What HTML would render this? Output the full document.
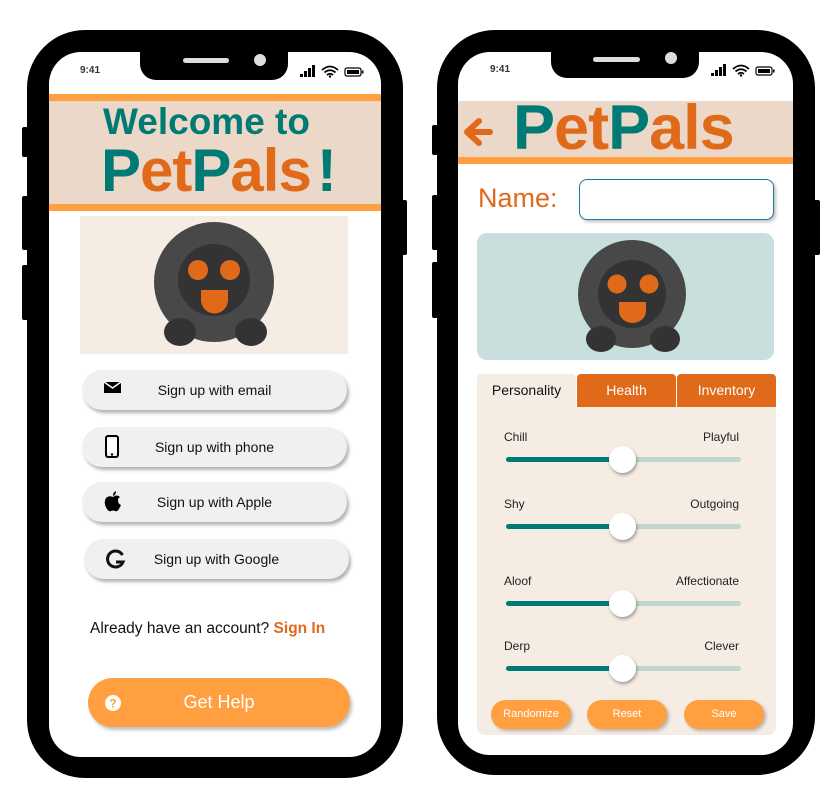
<!DOCTYPE html>
<html><head><meta charset="utf-8"><style>
*{margin:0;padding:0;box-sizing:border-box}
body{width:835px;height:803px;background:#fff;position:relative;overflow:hidden;font-family:"Liberation Sans",sans-serif}
.a{position:absolute}
.phone{position:absolute;background:#000;border-radius:58px}
.screen{position:absolute;background:#fff;border-radius:32px;overflow:hidden}
.notch{position:absolute;background:#000;border-radius:0 0 16px 16px}
.btn{position:absolute;left:82px;width:265px;height:40px;background:#f0f0f0;border-radius:20px;box-shadow:2px 3px 3px rgba(0,0,0,.3);font-size:14px;color:#111}
.btn span{position:absolute;left:0;right:0;top:12px;text-align:center}
.btn svg{position:absolute;left:22px;top:10px}
.lab{position:absolute;font-size:12px;color:#222}
.track{position:absolute;left:506px;width:235px;height:5px;background:#c2d6d0;border-radius:3px}
.track i{position:absolute;left:0;top:0;width:116px;height:5px;background:#007a74;border-radius:3px}
.thumb{position:absolute;left:609px;width:27px;height:27px;border-radius:50%;background:#fff;box-shadow:1px 2px 3px rgba(0,0,0,.35)}
.ob{position:absolute;top:700px;width:80px;height:29px;background:#ff9f3f;border-radius:15px;color:#fff;font-size:11px;text-align:center;line-height:29px;box-shadow:2px 2px 3px rgba(0,0,0,.25)}
.tab{position:absolute;top:374px;height:33px;font-size:14px;text-align:center;line-height:33px;border-radius:4px 4px 0 0}
</style></head><body>

<!-- Left phone -->
<div class="a" style="left:22px;top:127px;width:6px;height:30px;background:#000;border-radius:2px"></div>
<div class="a" style="left:22px;top:196px;width:6px;height:54px;background:#000;border-radius:2px"></div>
<div class="a" style="left:22px;top:265px;width:6px;height:55px;background:#000;border-radius:2px"></div>
<div class="a" style="left:400px;top:200px;width:7px;height:55px;background:#000;border-radius:2px"></div>
<div class="phone" style="left:27px;top:30px;width:376px;height:748px"></div>
<div class="screen" style="left:49px;top:52px;width:332px;height:705px">
</div>
<div class="notch" style="left:140px;top:50px;width:148px;height:30px"></div>
<div class="a" style="left:183px;top:58px;width:46px;height:5px;background:#ddd;border-radius:3px"></div>
<div class="a" style="left:254px;top:54px;width:12px;height:12px;background:#ddd;border-radius:50%"></div>
<div class="a" style="left:80px;top:65px;font-size:10px;font-weight:bold;color:#333">9:41</div>
<svg class="a" style="left:298px;top:64px" width="68" height="14"><rect x="2" y="10" width="3" height="3"/><rect x="6" y="7" width="3" height="6"/><rect x="10" y="4" width="3" height="9"/><rect x="14" y="1" width="3" height="12"/><path d="M24 6 Q32 -1 40 6 M26.5 8.5 Q32 4 37.5 8.5 M29 11 Q32 8.5 35 11" stroke="#000" stroke-width="1.8" fill="none"/><circle cx="32" cy="12.5" r="1.2"/><rect x="47" y="4" width="16" height="8" rx="2" fill="none" stroke="#000" stroke-width="1.2"/><rect x="49" y="6" width="12" height="4"/><rect x="64" y="6.5" width="1.5" height="3"/></svg>

<div class="a" style="left:49px;top:94px;width:332px;height:7px;background:#ff9f3f"></div>
<div class="a" style="left:49px;top:101px;width:332px;height:103px;background:#ebd8c8"></div>
<div class="a" style="left:49px;top:204px;width:332px;height:7px;background:#ff9f3f"></div>
<div class="a" style="left:103px;top:101px;font-size:37px;font-weight:bold;color:#007a74;white-space:nowrap">Welcome to</div>
<div class="a" style="left:101px;top:139px;font-size:60px;font-weight:bold;white-space:nowrap;letter-spacing:-1px;line-height:64px"><span style="color:#007a74">P</span><span style="color:#e06a1a">et</span><span style="color:#007a74">P</span><span style="color:#e06a1a">als</span><span style="color:#007a74;margin-left:6px">!</span></div>

<div class="a" style="left:80px;top:216px;width:268px;height:138px;background:#f5ece4"></div>
<svg class="a" style="left:150px;top:222px" width="130" height="128">
<circle cx="64" cy="60" r="60" fill="#484848"/><circle cx="64" cy="58" r="36" fill="#333"/>
<circle cx="48" cy="48" r="10" fill="#e06a1a"/><circle cx="80" cy="48" r="10" fill="#e06a1a"/>
<path d="M51 68 H78 V78 A13 13 0 0 1 51 78 Z" fill="#e06a1a"/>
<ellipse cx="30" cy="110" rx="16" ry="14" fill="#333"/><ellipse cx="101" cy="110" rx="16" ry="14" fill="#333"/></svg>

<div class="btn" style="top:370px"><svg width="18" height="14"><rect x="0" y="2" width="17" height="11" fill="#000"/><path d="M0 2 L8.5 8 L17 2" stroke="#fff" stroke-width="1.5" fill="none"/></svg><span>Sign up with email</span></div>
<div class="btn" style="top:427px"><svg width="18" height="24" style="top:8px"><rect x="2" y="1" width="12" height="21" rx="2" fill="none" stroke="#000" stroke-width="2"/><rect x="3" y="4" width="10" height="14" fill="#fff"/><circle cx="8" cy="19.5" r="1.2"/></svg><span>Sign up with phone</span></div>
<div class="btn" style="top:482px"><svg width="18" height="22" style="top:8px"><path d="M12 1 Q12 5 9 6 Q9 2 12 1Z"/><path d="M9 7 Q5 5 2 8 Q-1 13 3 19 Q5 22 7 21 Q9 20 11 21 Q13 22 15 19 Q16 17 17 15 Q14 14 14 10 Q14 8 16 7 Q13 4 9 7Z"/></svg><span>Sign up with Apple</span></div>
<div class="btn" style="top:539px;left:84px"><svg width="20" height="20"><path d="M16.5 6 A8 8 0 1 0 17 13 H10" stroke="#111" stroke-width="3" fill="none"/></svg><span>Sign up with Google</span></div>

<div class="a" style="left:90px;top:620px;font-size:15.5px;color:#111;white-space:nowrap">Already have an account? <b style="color:#e06a1a">Sign In</b></div>
<div class="a" style="left:88px;top:678px;width:262px;height:49px;background:#ff9f3f;border-radius:25px;box-shadow:2px 3px 3px rgba(0,0,0,.25)"></div>
<div class="a" style="left:88px;top:692px;width:262px;text-align:center;color:#fff;font-size:18px">Get Help</div>
<svg class="a" style="left:104px;top:694px" width="18" height="18"><circle cx="9" cy="9" r="8" fill="#fff"/><text x="9" y="13.5" text-anchor="middle" font-size="12" font-weight="bold" fill="#ff9f3f" font-family="Liberation Sans">?</text></svg>

<!-- Right phone -->
<div class="a" style="left:432px;top:125px;width:6px;height:30px;background:#000;border-radius:2px"></div>
<div class="a" style="left:432px;top:195px;width:6px;height:55px;background:#000;border-radius:2px"></div>
<div class="a" style="left:432px;top:262px;width:6px;height:56px;background:#000;border-radius:2px"></div>
<div class="a" style="left:812px;top:200px;width:8px;height:55px;background:#000;border-radius:2px"></div>
<div class="phone" style="left:437px;top:30px;width:378px;height:745px"></div>
<div class="screen" style="left:458px;top:52px;width:335px;height:703px"></div>
<div class="notch" style="left:551px;top:50px;width:148px;height:28px"></div>
<div class="a" style="left:593px;top:57px;width:47px;height:5px;background:#ddd;border-radius:3px"></div>
<div class="a" style="left:665px;top:52px;width:12px;height:12px;background:#ddd;border-radius:50%"></div>
<div class="a" style="left:490px;top:64px;font-size:10px;font-weight:bold;color:#333">9:41</div>
<svg class="a" style="left:709px;top:63px" width="68" height="14"><rect x="2" y="10" width="3" height="3"/><rect x="6" y="7" width="3" height="6"/><rect x="10" y="4" width="3" height="9"/><rect x="14" y="1" width="3" height="12"/><path d="M24 6 Q32 -1 40 6 M26.5 8.5 Q32 4 37.5 8.5 M29 11 Q32 8.5 35 11" stroke="#000" stroke-width="1.8" fill="none"/><circle cx="32" cy="12.5" r="1.2"/><rect x="47" y="4" width="16" height="8" rx="2" fill="none" stroke="#000" stroke-width="1.2"/><rect x="49" y="6" width="12" height="4"/><rect x="64" y="6.5" width="1.5" height="3"/></svg>

<div class="a" style="left:458px;top:101px;width:335px;height:56px;background:#ebd8c8"></div>
<div class="a" style="left:458px;top:157px;width:335px;height:7px;background:#ff9f3f"></div>
<svg class="a" style="left:460px;top:115px" width="40" height="36"><path d="M30 17 H8 M19 6 L7 17 L19 28" stroke="#e06a1a" stroke-width="6" stroke-linecap="round" stroke-linejoin="round" fill="none"/></svg>
<div class="a" style="left:513px;top:94px;font-size:63px;font-weight:bold;white-space:nowrap;letter-spacing:-1px;line-height:68px"><span style="color:#007a74">P</span><span style="color:#e06a1a">et</span><span style="color:#007a74">P</span><span style="color:#e06a1a">als</span></div>

<div class="a" style="left:478px;top:183px;font-size:27px;color:#e06a1a">Name:</div>
<div class="a" style="left:579px;top:179px;width:195px;height:41px;border:1.5px solid #1a7aa0;border-radius:8px;background:#fff;box-shadow:2px 2px 3px rgba(0,0,0,.25)"></div>

<div class="a" style="left:477px;top:233px;width:297px;height:127px;background:#c8dfdd;border-radius:10px"></div>
<svg class="a" style="left:575px;top:238px" width="115" height="118">
<circle cx="57" cy="56" r="54" fill="#484848"/><circle cx="57" cy="56" r="34" fill="#333"/>
<circle cx="42" cy="46" r="9.5" fill="#e06a1a"/><circle cx="74" cy="46" r="9.5" fill="#e06a1a"/>
<path d="M44 64 H71 V73 A13.5 12 0 0 1 44 73 Z" fill="#e06a1a"/>
<ellipse cx="26" cy="101" rx="15" ry="13" fill="#333"/><ellipse cx="90" cy="101" rx="15" ry="13" fill="#333"/></svg>

<div class="tab" style="left:477px;width:99px;background:#f5ece4;color:#111">Personality</div>
<div class="tab" style="left:577px;width:99px;background:#e06a1a;color:#fff">Health</div>
<div class="tab" style="left:677px;width:99px;background:#e06a1a;color:#fff">Inventory</div>
<div class="a" style="left:477px;top:407px;width:299px;height:328px;background:#f5ece4;border-radius:0 0 8px 8px"></div>

<div class="lab" style="left:504px;top:430px">Chill</div><div class="lab" style="right:96px;top:430px">Playful</div>
<div class="track" style="top:457px"><i></i></div><div class="thumb" style="top:446px"></div>
<div class="lab" style="left:504px;top:497px">Shy</div><div class="lab" style="right:96px;top:497px">Outgoing</div>
<div class="track" style="top:524px"><i></i></div><div class="thumb" style="top:513px"></div>
<div class="lab" style="left:504px;top:574px">Aloof</div><div class="lab" style="right:96px;top:574px">Affectionate</div>
<div class="track" style="top:601px"><i></i></div><div class="thumb" style="top:590px"></div>
<div class="lab" style="left:504px;top:639px">Derp</div><div class="lab" style="right:96px;top:639px">Clever</div>
<div class="track" style="top:666px"><i></i></div><div class="thumb" style="top:655px"></div>

<div class="ob" style="left:491px">Randomize</div>
<div class="ob" style="left:587px">Reset</div>
<div class="ob" style="left:684px">Save</div>
</body></html>
